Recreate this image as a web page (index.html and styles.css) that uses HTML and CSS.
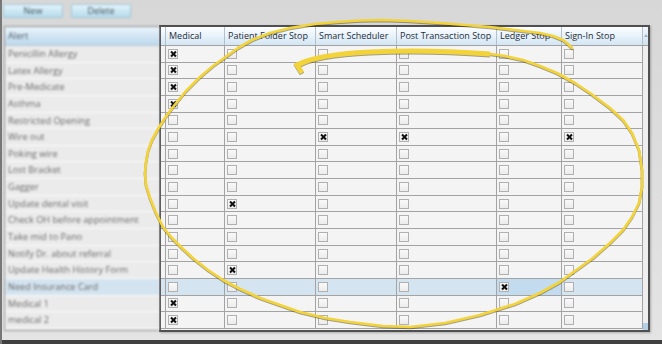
FILE: index.html
```html
<!DOCTYPE html>
<html lang="en">
<head>
  <meta charset="UTF-8" />
  <title>Alert Stops</title>
  <link rel="stylesheet" href="styles.css">
</head>
<body>
  <div class="app">
    <div class="toolbar">
      <button class="btn">New</button>
      <button class="btn">Delete</button>
    </div>

    <div class="main">
      <div class="alerts">
        <div class="alerts-head">Alert</div>
        <div class="alert-row">Penicillin Allergy</div>
        <div class="alert-row">Latex Allergy</div>
        <div class="alert-row">Pre-Medicate</div>
        <div class="alert-row">Asthma</div>
        <div class="alert-row">Restricted Opening</div>
        <div class="alert-row">Wire out</div>
        <div class="alert-row">Poking wire</div>
        <div class="alert-row">Lost Bracket</div>
        <div class="alert-row">Gagger</div>
        <div class="alert-row">Update dental visit</div>
        <div class="alert-row">Check OH before appointment</div>
        <div class="alert-row">Take mid to Pano</div>
        <div class="alert-row">Notify Dr. about referral</div>
        <div class="alert-row">Update Health History Form</div>
        <div class="alert-row sel">Need Insurance Card</div>
        <div class="alert-row">Medical 1</div>
        <div class="alert-row">medical 2</div>
      </div>

      <div class="grid">
        <div class="grid-head">
          <div class="hc w0"></div>
          <div class="hc w1">Medical</div>
          <div class="hc w2">Patient Folder Stop</div>
          <div class="hc w3">Smart Scheduler</div>
          <div class="hc w4">Post Transaction Stop</div>
          <div class="hc w5">Ledger Stop</div>
          <div class="hc w6">Sign-In Stop</div>
          <div class="sb-up"></div>
        </div>
        <div class="grid-body">
          <div class="rows">
            <div class="row"><div class="cell w0"></div><div class="cell w1"><span class="cb on"></span></div><div class="cell w2"><span class="cb"></span></div><div class="cell w3"><span class="cb"></span></div><div class="cell w4"><span class="cb"></span></div><div class="cell w5"><span class="cb"></span></div><div class="cell w6"><span class="cb"></span></div></div>
            <div class="row"><div class="cell w0"></div><div class="cell w1"><span class="cb on"></span></div><div class="cell w2"><span class="cb"></span></div><div class="cell w3"><span class="cb"></span></div><div class="cell w4"><span class="cb"></span></div><div class="cell w5"><span class="cb"></span></div><div class="cell w6"><span class="cb"></span></div></div>
            <div class="row"><div class="cell w0"></div><div class="cell w1"><span class="cb on"></span></div><div class="cell w2"><span class="cb"></span></div><div class="cell w3"><span class="cb"></span></div><div class="cell w4"><span class="cb"></span></div><div class="cell w5"><span class="cb"></span></div><div class="cell w6"><span class="cb"></span></div></div>
            <div class="row"><div class="cell w0"></div><div class="cell w1"><span class="cb on"></span></div><div class="cell w2"><span class="cb"></span></div><div class="cell w3"><span class="cb"></span></div><div class="cell w4"><span class="cb"></span></div><div class="cell w5"><span class="cb"></span></div><div class="cell w6"><span class="cb"></span></div></div>
            <div class="row"><div class="cell w0"></div><div class="cell w1"><span class="cb"></span></div><div class="cell w2"><span class="cb"></span></div><div class="cell w3"><span class="cb"></span></div><div class="cell w4"><span class="cb"></span></div><div class="cell w5"><span class="cb"></span></div><div class="cell w6"><span class="cb"></span></div></div>
            <div class="row"><div class="cell w0"></div><div class="cell w1"><span class="cb"></span></div><div class="cell w2"><span class="cb"></span></div><div class="cell w3"><span class="cb on"></span></div><div class="cell w4"><span class="cb on"></span></div><div class="cell w5"><span class="cb"></span></div><div class="cell w6"><span class="cb on"></span></div></div>
            <div class="row"><div class="cell w0"></div><div class="cell w1"><span class="cb"></span></div><div class="cell w2"><span class="cb"></span></div><div class="cell w3"><span class="cb"></span></div><div class="cell w4"><span class="cb"></span></div><div class="cell w5"><span class="cb"></span></div><div class="cell w6"><span class="cb"></span></div></div>
            <div class="row"><div class="cell w0"></div><div class="cell w1"><span class="cb"></span></div><div class="cell w2"><span class="cb"></span></div><div class="cell w3"><span class="cb"></span></div><div class="cell w4"><span class="cb"></span></div><div class="cell w5"><span class="cb"></span></div><div class="cell w6"><span class="cb"></span></div></div>
            <div class="row"><div class="cell w0"></div><div class="cell w1"><span class="cb"></span></div><div class="cell w2"><span class="cb"></span></div><div class="cell w3"><span class="cb"></span></div><div class="cell w4"><span class="cb"></span></div><div class="cell w5"><span class="cb"></span></div><div class="cell w6"><span class="cb"></span></div></div>
            <div class="row"><div class="cell w0"></div><div class="cell w1"><span class="cb"></span></div><div class="cell w2"><span class="cb on"></span></div><div class="cell w3"><span class="cb"></span></div><div class="cell w4"><span class="cb"></span></div><div class="cell w5"><span class="cb"></span></div><div class="cell w6"><span class="cb"></span></div></div>
            <div class="row"><div class="cell w0"></div><div class="cell w1"><span class="cb"></span></div><div class="cell w2"><span class="cb"></span></div><div class="cell w3"><span class="cb"></span></div><div class="cell w4"><span class="cb"></span></div><div class="cell w5"><span class="cb"></span></div><div class="cell w6"><span class="cb"></span></div></div>
            <div class="row"><div class="cell w0"></div><div class="cell w1"><span class="cb"></span></div><div class="cell w2"><span class="cb"></span></div><div class="cell w3"><span class="cb"></span></div><div class="cell w4"><span class="cb"></span></div><div class="cell w5"><span class="cb"></span></div><div class="cell w6"><span class="cb"></span></div></div>
            <div class="row"><div class="cell w0"></div><div class="cell w1"><span class="cb"></span></div><div class="cell w2"><span class="cb"></span></div><div class="cell w3"><span class="cb"></span></div><div class="cell w4"><span class="cb"></span></div><div class="cell w5"><span class="cb"></span></div><div class="cell w6"><span class="cb"></span></div></div>
            <div class="row"><div class="cell w0"></div><div class="cell w1"><span class="cb"></span></div><div class="cell w2"><span class="cb on"></span></div><div class="cell w3"><span class="cb"></span></div><div class="cell w4"><span class="cb"></span></div><div class="cell w5"><span class="cb"></span></div><div class="cell w6"><span class="cb"></span></div></div>
            <div class="row sel"><div class="cell w0"></div><div class="cell w1"><span class="cb"></span></div><div class="cell w2"><span class="cb"></span></div><div class="cell w3"><span class="cb"></span></div><div class="cell w4"><span class="cb"></span></div><div class="cell w5 cur"><span class="cb on"></span></div><div class="cell w6"><span class="cb"></span></div></div>
            <div class="row"><div class="cell w0"></div><div class="cell w1"><span class="cb on"></span></div><div class="cell w2"><span class="cb"></span></div><div class="cell w3"><span class="cb"></span></div><div class="cell w4"><span class="cb"></span></div><div class="cell w5"><span class="cb"></span></div><div class="cell w6"><span class="cb"></span></div></div>
            <div class="row"><div class="cell w0"></div><div class="cell w1"><span class="cb on"></span></div><div class="cell w2"><span class="cb"></span></div><div class="cell w3"><span class="cb"></span></div><div class="cell w4"><span class="cb"></span></div><div class="cell w5"><span class="cb"></span></div><div class="cell w6"><span class="cb"></span></div></div>
          </div>
          <div class="vscroll"><div class="grip"></div></div>
        </div>
      </div>
    </div>

    <!-- hand-drawn highlight over the grid -->
    <svg class="marks" width="662" height="344" viewBox="0 0 662 344">
      <polyline class="loop" points="299,66 310,60 325,56 350,53 380,51.5 410,51 440,51.5 483,53 505,56 523,60 540,66 557,73 575,83 590,93 610,108 623,120 632,133 639,150 642,170 642,187 639,203 632,217 623,230 610,243 593,258 575,271 560,282 540,293 515,304 480,315 445,323 410,327 383,326 350,322 325,318 300,312 280,305 260,298 240,289 223,280 208,270 194,259 182,248 172,238 163,227 156,213 150,198 146,185 145,173 146,162 148,151 152,140 158,129 165,118 173,107 186,91 200,77 213,66 227,56 238,48 252,40 270,33 290,28 315,24 337,22 360,20.5 383,20 410,21 440,23 465,25 490,27 515,30 540,33 553,36 563,40 568,44 572,48"/>
      <path class="arrow" d="M 302 73 L 297 65 C 310 58, 330 54, 370 52 S 450 51, 490 54"/>
    </svg>
  </div>
</body>
</html>
```

FILE: styles.css
```css
body {
  margin: 0;
  font-family: "Open Sans", "Segoe UI", sans-serif;
}

.app {
  position: relative;
  width: 662px;
  height: 344px;
  overflow: hidden;
  background: linear-gradient(to bottom, #d7d7d7, #e4e4e4);
  box-shadow: inset 2px 0 #777, inset 0 -4px #404040;
}

/* toolbar */
.toolbar {
  height: 25px;
  box-sizing: border-box;
  padding: 4px 0 0 3px;
  display: flex;
  gap: 8px;
  filter: blur(0.9px);
}

.btn {
  width: 60px;
  height: 14px;
  padding: 0;
  border: 1px solid #a3c7d8;
  border-radius: 1px;
  background: linear-gradient(to bottom, #e3f3fa, #b6dbeb);
  font-family: "Open Sans", sans-serif;
  font-size: 9px;
  line-height: 12px;
  color: #43535d;
}

.main {
  display: flex;
  padding-left: 4px;
}

/* left alert list (blurred in the shot) */
.alerts {
  width: 155px;
  height: 305px;
  margin-top: 1px;
  box-sizing: border-box;
  border: 1px solid #8e8e8e;
  border-right: none;
  background: #e9e9e9;
  filter: blur(1.1px);
}

.alerts-head {
  height: 19px;
  box-sizing: border-box;
  padding-left: 3px;
  border-bottom: 1px solid #b9c9d6;
  background: linear-gradient(to bottom, #eaf4fb, #bcd8ec);
  font-size: 9.2px;
  line-height: 18px;
  color: #4b5a66;
}

.alert-row {
  height: 16.65px;
  box-sizing: border-box;
  padding-left: 3px;
  border-bottom: 1px solid #fbfbfb;
  background: #ebebeb;
  font-size: 9.2px;
  line-height: 15.6px;
  color: #6a6a6a;
  white-space: nowrap;
}

.alert-row.sel {
  background: #d3e3ef;
}

/* data grid */
.grid {
  width: 491px;
  height: 307px;
  box-sizing: border-box;
  border: 2px solid #505050;
  display: flex;
  flex-direction: column;
  background: #f4f4f4;
  box-shadow: 1px 1px 2px rgba(0, 0, 0, 0.25);
}

.grid-head {
  display: flex;
  height: 19px;
  box-sizing: border-box;
  border-bottom: 1px solid #a3a3a3;
  background: linear-gradient(to bottom, #fcfeff, #d3e6f4);
}

.hc {
  box-sizing: border-box;
  padding-left: 3px;
  border-right: 1px solid #b3c1cd;
  font-size: 9px;
  line-height: 18px;
  color: #1e2c3a;
  white-space: nowrap;
}

.sb-up {
  flex: 1;
  position: relative;
  background: linear-gradient(to bottom, #f3f8fc, #cfe2f0);
}

.sb-up::after {
  content: '';
  position: absolute;
  left: 1px;
  top: 7px;
  border-left: 2px solid transparent;
  border-right: 2px solid transparent;
  border-bottom: 3px solid #9fb3c4;
}

.grid-body {
  flex: 1;
  display: flex;
}

.rows {
  width: 482px;
}

.row {
  display: flex;
  height: 16.65px;
  box-sizing: border-box;
  border-bottom: 1px solid #a3a3a3;
}

.row.sel {
  background: #d4e4f1;
}

.cell {
  box-sizing: border-box;
  display: flex;
  align-items: center;
  padding-left: 2px;
  border-right: 1px solid #a3a3a3;
}

.cell.cur {
  background: #c2dbee;
}

.w0 { width: 5px; padding-left: 0; }
.w1 { width: 59px; }
.w2 { width: 91px; }
.w3 { width: 81px; }
.w4 { width: 100px; }
.w5 { width: 65px; }
.w6 { width: 81px; }

.vscroll {
  flex: 1;
  display: flex;
  flex-direction: column;
  justify-content: flex-end;
  background: #efefef;
}

.grip {
  height: 7px;
  background: #b3cfe4;
}

/* checkbox */
.cb {
  position: relative;
  width: 10px;
  height: 10px;
  box-sizing: border-box;
  border: 1px solid #b0b0b0;
  background: linear-gradient(to bottom, #f9f9f9, #ececec);
}

.cb.on::before,
.cb.on::after {
  content: '';
  position: absolute;
  left: 0.5px;
  top: 3px;
  width: 7px;
  height: 2px;
  background: #111;
  transform: rotate(45deg);
}

.cb.on::after {
  transform: rotate(-45deg);
}

/* yellow marker */
.marks {
  position: absolute;
  left: 0;
  top: 0;
  pointer-events: none;
  filter: drop-shadow(0 1px 0.6px rgba(60, 50, 0, 0.45));
}

.loop {
  fill: none;
  stroke: #f3d33a;
  stroke-width: 2.7;
  stroke-linejoin: round;
  stroke-linecap: round;
}

.arrow {
  fill: none;
  stroke: #f3d33a;
  stroke-width: 5;
  stroke-linejoin: miter;
}
```
